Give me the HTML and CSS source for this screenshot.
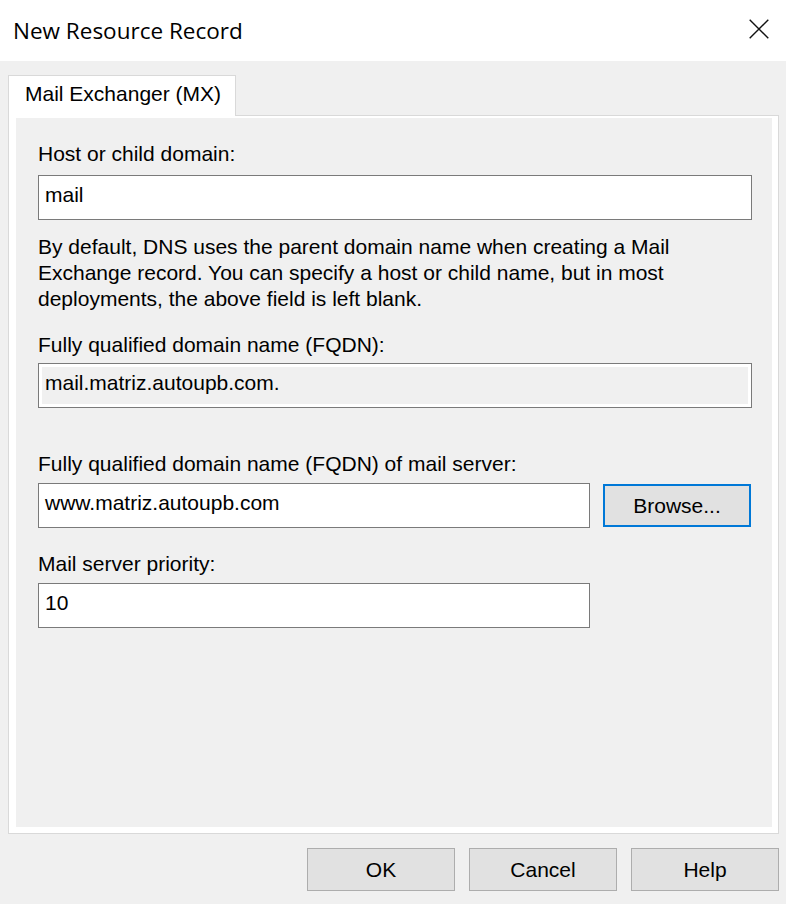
FILE: index.html
```html
<!DOCTYPE html>
<html lang="en">
<head>
<meta charset="utf-8">
<title>New Resource Record</title>
<link rel="stylesheet" href="styles.css">
</head>
<body>
<div class="dialog">
  <header class="titlebar">
    <span class="title">New Resource Record</span>
    <button class="close" aria-label="Close">
      <svg width="20" height="20" viewBox="0 0 20 20"><path d="M0.7 0.7 L19.3 19.3 M19.3 0.7 L0.7 19.3" stroke="#111" stroke-width="1.4" fill="none"/></svg>
    </button>
  </header>
  <main class="content">
    <div class="tabs">
      <div class="tab">Mail Exchanger (MX)</div>
    </div>
    <section class="panel">
      <div class="page">
        <div class="lbl lbl-host">Host or child domain:</div>
        <div class="field">mail</div>
        <p class="desc">By default, DNS uses the parent domain name when creating a Mail Exchange record. You can specify a host or child name, but in most deployments, the above field is left blank.</p>
        <div class="lbl lbl-fqdn">Fully qualified domain name (FQDN):</div>
        <div class="field field-ro">mail.matriz.autoupb.com.</div>
        <div class="lbl lbl-server">Fully qualified domain name (FQDN) of mail server:</div>
        <div class="row">
          <div class="field field-short">www.matriz.autoupb.com</div>
          <button class="btn btn-focus">Browse...</button>
        </div>
        <div class="lbl lbl-prio">Mail server priority:</div>
        <div class="field field-short">10</div>
      </div>
    </section>
    <div class="actions">
      <button class="btn">OK</button>
      <button class="btn">Cancel</button>
      <button class="btn">Help</button>
    </div>
  </main>
</div>
</body>
</html>
```
FILE: styles.css
```css
html, body {
  margin: 0;
  padding: 0;
  background: #f0f0f0;
}

body {
  font-family: "Liberation Sans", Arial, sans-serif;
  font-size: 21px;
  color: #000;
}

.dialog {
  width: 786px;
  height: 904px;
  background: #f0f0f0;
}

.titlebar {
  height: 61px;
  background: #fff;
  display: flex;
  justify-content: space-between;
  align-items: flex-start;
  padding: 0 17px 0 13px;
  box-sizing: border-box;
}

.title {
  font-family: "Open Sans", "Noto Sans", sans-serif;
  font-size: 22.5px;
  line-height: 30px;
  margin-top: 16px;
  color: #000;
}

.close {
  margin-top: 19px;
  padding: 0;
  border: 0;
  background: transparent;
  width: 20px;
  height: 20px;
  display: block;
}

.close svg {
  display: block;
}

.tabs {
  display: flex;
  padding: 14px 0 0 8px;
}

.tab {
  position: relative;
  z-index: 1;
  width: 228px;
  height: 41px;
  margin-bottom: -1px;
  box-sizing: border-box;
  border: 1px solid #d9d9d9;
  border-bottom: 0;
  background: #fff;
  padding: 6px 0 0 16px;
  line-height: 24px;
}

.panel {
  margin: 0 7px 0 8px;
  border: 1px solid #d9d9d9;
  background: #fff;
  padding: 2px 6px 6px 7px;
}

.page {
  background: #f0f0f0;
  height: 709px;
  box-sizing: border-box;
  padding: 24px 20px 0 22px;
}

.lbl {
  line-height: 24px;
}

.lbl-host { margin-bottom: 9px; }
.lbl-fqdn { margin-top: 21px; margin-bottom: 6px; }
.lbl-server { margin-top: 44px; margin-bottom: 7px; }
.lbl-prio { margin-top: 24px; margin-bottom: 7px; }

.field {
  width: 714px;
  height: 45px;
  box-sizing: border-box;
  border: 1px solid #7a7a7a;
  background: #fff;
  padding: 7px 5px 0 6px;
  line-height: 24px;
  white-space: nowrap;
}

.field-ro {
  background: #f0f0f0;
  box-shadow: inset 0 0 0 3px #fff;
}

.field-short {
  width: 552px;
}

.desc {
  margin: 14px 0 0;
  line-height: 26px;
  width: 714px;
}

.row {
  display: flex;
  align-items: center;
  gap: 13px;
}

.btn {
  width: 148px;
  height: 43px;
  box-sizing: border-box;
  border: 1px solid #adadad;
  background: #e1e1e1;
  font-family: "Liberation Sans", Arial, sans-serif;
  font-size: 21px;
  color: #000;
  padding: 0;
  margin: 0;
  border-radius: 0;
}

.btn-focus {
  border: 2px solid #0078d7;
}

.actions {
  display: flex;
  justify-content: flex-end;
  gap: 14px;
  padding: 14px 7px 0 0;
}
```
